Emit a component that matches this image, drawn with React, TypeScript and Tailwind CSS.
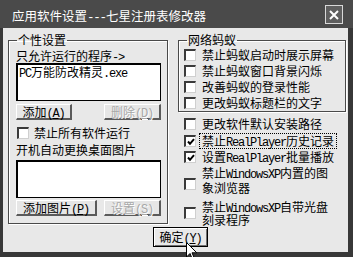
import { ReactNode } from 'react'

const cjk = "font-['Noto_Sans_CJK_SC',sans-serif]"

function L({ children }: { children: ReactNode }) {
  return <span className="font-['Liberation_Mono',monospace] leading-[0px] tracking-[-1.2px]">{children}</span>
}

function Box({ checked, className = '' }: { checked?: boolean; className?: string }) {
  return (
    <span
      className={`flex h-[12px] w-[12px] shrink-0 items-center justify-center border-t-2 border-l-2 border-r border-b border-t-[#3a3a3a] border-l-[#3a3a3a] border-r-[#cfcfcf] border-b-[#cfcfcf] bg-white ${className}`}
    >
      {checked && (
        <svg width="8" height="8" viewBox="0 0 8 8">
          <path d="M1 3.5 L3 5.8 L7 1.2" stroke="#000" strokeWidth="2" fill="none" />
        </svg>
      )}
    </span>
  )
}

function Btn({ className, disabled, children }: { className: string; disabled?: boolean; children: ReactNode }) {
  return (
    <div
      className={`flex h-[16px] items-center justify-center border-t border-l border-r-2 border-b-2 border-t-white border-l-white border-r-[#5a5a5a] border-b-[#5a5a5a] bg-[#e6e6e6] text-[12px] leading-[12px] ${
        disabled ? 'text-[#a8a8a8] [text-shadow:1px_1px_0_#fff]' : 'text-black'
      } ${className}`}
    >
      <span>{children}</span>
    </div>
  )
}

function Row({ checked, children, className = '' }: { checked?: boolean; children: ReactNode; className?: string }) {
  return (
    <div className={`flex h-[16px] shrink-0 items-center gap-[6px] text-[12px] leading-[12px] ${className}`}>
      <Box checked={checked} />
      <span className="whitespace-nowrap">{children}</span>
    </div>
  )
}

const Fs = 'border border-[#4a4a4a] shadow-[1px_1px_0_#fff,inset_1px_1px_0_#fff]'

export default function App() {
  return (
    <div className={`relative flex h-[257px] w-[353px] flex-col overflow-hidden bg-[#383838] text-black ${cjk}`}>
      {/* title bar */}
      <div className="flex h-[28px] shrink-0 items-center justify-between bg-[#4a4a4a] pt-[3px] pl-[12px] pr-[10px]">
        <span className="whitespace-nowrap text-[12.5px] leading-[14px] text-white">
          应用软件设置<L>---</L>七星注册表修改器
        </span>
        <span className="-mt-[2px] flex h-[19px] w-[18px] items-center justify-center border border-[#d8d8d8] bg-[#5e5e5e]">
          <svg width="10" height="10" viewBox="0 0 10 10">
            <path d="M1 1 L9 9 M9 1 L1 9" stroke="#fff" strokeWidth="2" />
          </svg>
        </span>
      </div>

      {/* body */}
      <div className="mb-[5px] ml-[3px] mr-[5px] flex flex-1 flex-col bg-[#e8e8e8] pt-[5px]">
        <div className="flex h-[191px] shrink-0 items-start">
          {/* left group */}
          <fieldset className={`ml-[5px] w-[160px] pb-[7px] ${Fs}`}>
            <legend className="ml-[8px] px-[1px] text-[12px] leading-[14px]">个性设置</legend>
            <div className="flex flex-col pl-[7px] pr-[6px]">
              <div className="mt-[2px] h-[14px] whitespace-nowrap text-[12px] leading-[14px]">
                只允许运行的程序<L>-&gt;</L>
              </div>
              <div className="h-[38px] w-[145px] border-t-2 border-l-2 border-r border-b border-black bg-white px-[1px] text-[12px] leading-[14px]">
                <L>PC</L>万能防改精灵<L>.exe</L>
              </div>
              <div className="mt-[3px] flex justify-between">
                <Btn className="w-[56px]">
                  添加<L>(<u>A</u>)</L>
                </Btn>
                <Btn className="w-[57px]" disabled>
                  删除<L>(<u>D</u>)</L>
                </Btn>
              </div>
              <div className="mt-[6px] flex h-[14px] items-center gap-[5px] pl-[1px] text-[12px] leading-[12px]">
                <Box />
                <span className="whitespace-nowrap">禁止所有软件运行</span>
              </div>
              <div className="mt-[3px] h-[14px] whitespace-nowrap text-[12px] leading-[14px]">开机自动更换桌面图片</div>
              <div className="mt-[3px] h-[38px] w-[145px] border-t-2 border-l-2 border-r border-b border-black bg-white" />
              <div className="mt-[2px] flex justify-between">
                <Btn className="w-[81px]">
                  添加图片<L>(<u>P</u>)</L>
                </Btn>
                <Btn className="w-[57px]" disabled>
                  设置<L>(<u>S</u>)</L>
                </Btn>
              </div>
            </div>
          </fieldset>

          {/* right column */}
          <div className="ml-[10px] flex w-[168px] flex-col">
            <fieldset className={`w-[168px] ${Fs}`}>
              <legend className="ml-[8px] px-[1px] text-[12px] leading-[14px]">网络蚂蚁</legend>
              <div className="flex flex-col pl-[5px]">
                <Row className="h-[15px]">禁止蚂蚁启动时展示屏幕</Row>
                <Row>禁止蚂蚁窗口背景闪烁</Row>
                <Row>改善蚂蚁的登录性能</Row>
                <Row className="h-[14px]">更改蚂蚁标题栏的文字</Row>
              </div>
            </fieldset>
            <div className="flex flex-col pl-[6px]">
              <Row className="mt-[4px]">更改软件默认安装路径</Row>
              <div className="mt-[1px] flex h-[16px] items-center gap-[6px] text-[12px] leading-[12px]">
                <Box checked />
                <span className="-ml-[1px] whitespace-nowrap px-[1px] outline outline-1 outline-offset-[1px] outline-dotted outline-black">
                  禁止<L>RealPlayer</L>历史记录
                </span>
              </div>
              <Row checked className="h-[13px]">
                设置<L>RealPlayer</L>批量播放
              </Row>
              <div className="flex h-[30px] items-start gap-[6px] text-[12px] leading-[15px]">
                <Box className="mt-[13px]" />
                <span className="whitespace-nowrap">
                  禁止<L>WindowsXP</L>内置的图
                  <br />
                  象浏览器
                </span>
              </div>
              <div className="mt-[5px] flex h-[26px] items-start gap-[6px] text-[12px] leading-[13px]">
                <Box className="mt-[7px]" />
                <span className="whitespace-nowrap">
                  禁止<L>WindowsXP</L>自带光盘
                  <br />
                  刻录程序
                </span>
              </div>
            </div>
          </div>
        </div>

        {/* OK button */}
        <div className="mt-[3px] pl-[150px]">
          <div className="flex h-[20px] w-[55px] items-center justify-center border border-black bg-[#e8e8e8] text-[12px] leading-[12px] shadow-[inset_1px_1px_0_#fff,inset_-1px_-1px_0_#707070]">
            <span>
              确定<L>(<u>Y</u>)</L>
            </span>
          </div>
        </div>
      </div>

      {/* mouse cursor */}
      <svg className="absolute left-[186px] top-[242px]" width="12" height="19" viewBox="0 0 12 19">
        <path d="M0.5 0.5 L0.5 15 L4 11.5 L6.5 17.5 L8.5 16.5 L6 10.8 L10.8 10.8 Z" fill="#fff" stroke="#000" strokeWidth="1" />
      </svg>
    </div>
  )
}
